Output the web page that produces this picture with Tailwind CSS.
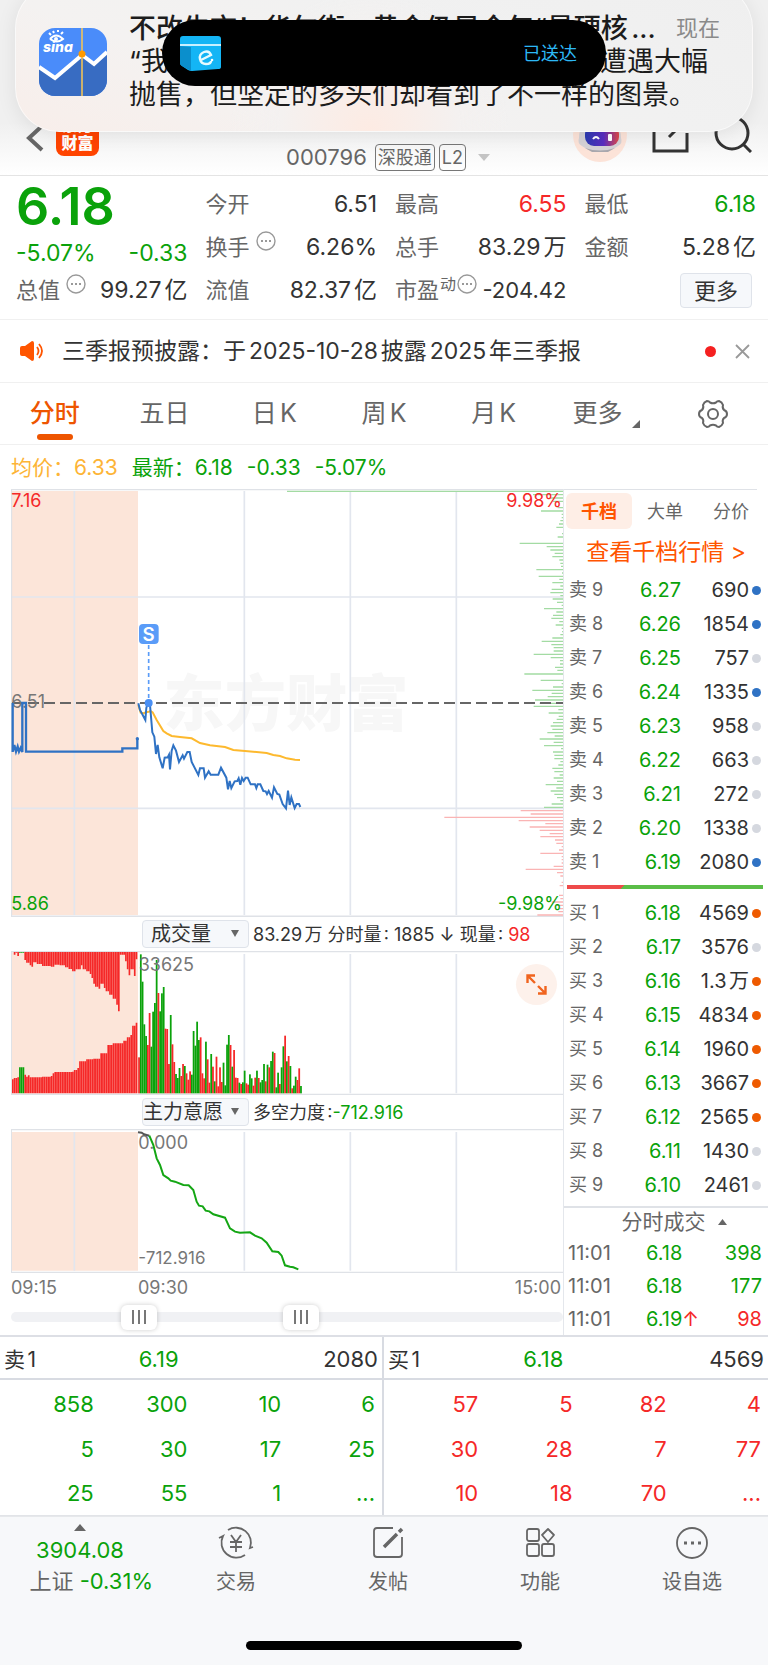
<!DOCTYPE html>
<html lang="zh-CN">
<head>
<meta charset="utf-8">
<meta name="viewport" content="width=device-width, initial-scale=1">
<title>凯撒旅业 000796</title>
<script src="https://cdn.jsdelivr.net/npm/@tailwindcss/browser@4"></script>
</head>
<body class="bg-white text-[#333] font-['Inter','Noto_Sans_CJK_SC',sans-serif] [text-autospace:normal]">

<!-- 顶部导航 -->
<header class="relative h-44 border-b border-[#e4e4e4] bg-linear-to-b from-[#f0f0f0] from-70% to-white">
  <div class="flex h-full items-end justify-between pl-6 pr-4">
    <div class="flex w-[220px] items-end gap-3 pb-[19px]">
      <button aria-label="返回" class="pb-1">
        <svg class="h-[28px] w-[20px]" viewBox="0 0 20 28" fill="none" stroke="#666" stroke-width="4"><path d="M18 2 5 14l13 12"/></svg>
      </button>
      <div class="h-[44px] w-[43px] rounded-lg bg-[#ff4400] pt-1 text-center text-base leading-[18px] font-black text-white">东方<br>财富</div>
    </div>
    <div class="flex flex-col items-center pr-3">
      <h1 class="pb-[5px] text-2xl leading-[26px] font-bold text-[#ff6a1a]">凯撒旅业</h1>
      <div class="flex h-9 items-center gap-1 text-[#666]">
        <span class="pr-1 text-[22px]">000796</span>
        <span class="rounded border border-[#777] px-[2px] text-[18px] leading-[25px]">深股通</span>
        <span class="rounded border border-[#777] px-[2px] text-[18px] leading-[25px]">L2</span>
        <svg class="ml-2 h-[7px] w-3" viewBox="0 0 12 7"><path d="M0 0h12L6 7z" fill="#c4c4c4"/></svg>
      </div>
    </div>
    <div class="flex w-[208px] items-end justify-end gap-[25px] pb-[13px]">
      <svg class="h-[54px] w-[54px]" viewBox="0 0 54 54">
        <defs>
          <linearGradient id="face"><stop offset="0" stop-color="#2a3bb0"/><stop offset=".55" stop-color="#5a2ec0"/><stop offset="1" stop-color="#e04848"/></linearGradient>
        </defs>
        <circle cx="27" cy="27" r="27" fill="#fce3d8"/>
        <path d="M6 30q0-18 21-18t21 18q2 5-3 8-8 6-18 6T9 38q-5-3-3-8z" fill="#d4d2d6"/>
        <path d="M12 40q15 5 30 0l-7 4H19z" fill="#a9a7ad"/>
        <rect x="12" y="17" width="34" height="21" rx="9" fill="url(#face)"/>
        <path d="M20 31q3-4 6 0" fill="none" stroke="#fff" stroke-width="2"/>
        <rect x="35" y="26" width="4" height="7" rx="1" fill="#fff"/>
      </svg>
      <button aria-label="分享" class="pb-[9px]">
        <svg class="h-[36px] w-[37px]" viewBox="0 0 37 36" fill="none" stroke="#333" stroke-width="3"><path d="M14 2H2v32h33V16M17 20 34 3M24 2h11v11"/></svg>
      </button>
      <button aria-label="搜索" class="pb-[9px]">
        <svg class="h-[38px] w-[38px]" viewBox="0 0 38 38" fill="none" stroke="#333" stroke-width="3"><circle cx="18" cy="18" r="16"/><path d="m29 29 8 8"/></svg>
      </button>
    </div>
  </div>

  <!-- 系统通知横幅 -->
  <aside class="absolute inset-x-[15px] -top-4 flex h-[148px] gap-[22px] rounded-[44px] border border-white/60 bg-[#f3f3f3] bg-[radial-gradient(circle_at_48%_100%,#fdebe3_0%,#f4f1f0_22%,transparent_34%),linear-gradient(20deg,#f8eeea_0%,#f4f2f1_32%,#f1f1f1_60%,#efefef_100%)] pt-[27px] pr-8 pl-[23px] shadow-[0_3px_20px_rgba(0,0,0,0.08)]">
    <svg class="mt-4 h-[68px] w-[68px] shrink-0" viewBox="0 0 68 68">
      <defs><clipPath id="app"><rect width="68" height="68" rx="16"/></clipPath></defs>
      <g clip-path="url(#app)">
        <path d="M0 0h68v68H0z" fill="#4a8cfa"/>
        <path d="m0 39 16 11 27-23 12 9 13-12v44H0z" fill="#386cc2"/>
        <path d="m0 39 16 11 27-23 12 9 13-12" fill="none" stroke="#fff" stroke-width="4"/>
        <path d="M43 0v68" stroke="#fbc750" stroke-width="1.5"/>
        <circle cx="43" cy="26" r="3.5" fill="#ff9a00"/>
      </g>
      <text x="4" y="24" font-size="14" font-weight="800" font-style="italic" fill="#fff">sina</text>
      <path d="M11 11q6-7 13 0-6 5-13 0M12 7l-2-2m5 0-1-2m5 1V2m3 4 2-2" fill="none" stroke="#fff" stroke-width="2"/>
      <circle cx="17" cy="11" r="2" fill="#fff"/>
    </svg>
    <div class="min-w-0 flex-1 text-[27px] leading-[33px] text-[#1c1c1c]">
      <div class="flex items-center justify-between">
        <strong class="whitespace-nowrap font-medium">不改牛市！华尔街：黄金仍是今年“最硬核...</strong>
        <time class="shrink-0 text-[22px] text-[#8a8a8a]">现在</time>
      </div>
      <p class="whitespace-nowrap">“我们从未见过如此行情，尽管黄金本周遭遇大幅<br>抛售，但坚定的多头们却看到了不一样的图景。</p>
    </div>
  </aside>

  <!-- 灵动岛 -->
  <div class="absolute top-5 left-1/2 flex h-[66px] w-[444px] -translate-x-1/2 items-center justify-between rounded-full bg-black pr-[29px] pl-[18px]">
    <svg class="h-[35px] w-[42px]" viewBox="0 0 42 35">
      <path d="M0 3q0-3 3-3h35q3 0 3 3v28q0 2-3 2l-26 2q-2 0-4-1l-6-4q-2-1-2-3z" fill="#14b5f5"/>
      <path d="M0 10l11 1v24l-9-5q-2-1-2-3z" fill="#0b8fcc"/>
      <path d="M0 8h41v2H0z" fill="#c8f0ff"/>
      <path d="M21 24l10-5q-2-5-7-3t-4 7 6 5 5-3" fill="none" stroke="#e8fbff" stroke-width="2.4"/>
      <circle cx="32" cy="24" r="1.3" fill="#fff"/>
    </svg>
    <span class="text-[18px] text-[#2db8f5]">已送达</span>
  </div>
</header>

<!-- 行情概要 -->
<section class="grid grid-cols-4 gap-x-[18px] border-b border-[#f0f0f0] pt-[6px] pr-3 pb-[7px] pl-4 text-[22px]">
  <div class="flex h-11 items-center pt-[6px] text-[52px] font-semibold text-[#0aa20a]">6.18</div>
  <div class="flex h-11 items-center justify-between"><span class="text-[#666]">今开</span><span class="text-[23px]">6.51</span></div>
  <div class="flex h-11 items-center justify-between"><span class="text-[#666]">最高</span><span class="text-[23px] text-[#f52828]">6.55</span></div>
  <div class="flex h-11 items-center justify-between"><span class="text-[#666]">最低</span><span class="text-[23px] text-[#0aa20a]">6.18</span></div>

  <div class="flex h-[43px] items-center justify-between pt-3 text-[23px] text-[#0aa20a]"><span>-5.07%</span><span>-0.33</span></div>
  <div class="flex h-[43px] items-center justify-between">
    <span class="flex items-start gap-[6px] text-[#666]">换手
      <svg class="h-5 w-5" viewBox="0 0 20 20" fill="none" stroke="#999" stroke-width="1.4"><circle cx="10" cy="10" r="9"/><path d="M5 10h2m2 0h2m2 0h2" stroke-width="2"/></svg>
    </span>
    <span class="text-[23px]">6.26%</span>
  </div>
  <div class="flex h-[43px] items-center justify-between"><span class="text-[#666]">总手</span><span class="text-[23px]">83.29万</span></div>
  <div class="flex h-[43px] items-center justify-between"><span class="text-[#666]">金额</span><span class="text-[23px]">5.28亿</span></div>

  <div class="flex h-[43px] items-center justify-between whitespace-nowrap">
    <span class="flex items-start gap-[6px] text-[#666]">总值
      <svg class="h-5 w-5" viewBox="0 0 20 20" fill="none" stroke="#999" stroke-width="1.4"><circle cx="10" cy="10" r="9"/><path d="M5 10h2m2 0h2m2 0h2" stroke-width="2"/></svg>
    </span>
    <span class="text-[23px]">99.27亿</span>
  </div>
  <div class="flex h-[43px] items-center justify-between"><span class="text-[#666]">流值</span><span class="text-[23px]">82.37亿</span></div>
  <div class="flex h-[43px] items-center justify-between whitespace-nowrap">
    <span class="flex items-start gap-[1px] text-[#666]">市盈<small class="text-base leading-5">动</small>
      <svg class="h-5 w-5" viewBox="0 0 20 20" fill="none" stroke="#999" stroke-width="1.4"><circle cx="10" cy="10" r="9"/><path d="M5 10h2m2 0h2m2 0h2" stroke-width="2"/></svg>
    </span>
    <span>-204.42</span>
  </div>
  <div class="flex h-[43px] items-center justify-end pr-1">
    <button class="h-[35px] w-[72px] rounded border border-[#dfe3ea] bg-[#f6f8fb] leading-8">更多</button>
  </div>
</section>

<!-- 公告 -->
<section class="flex h-[63px] items-center border-b border-[#f0f0f0] pr-[18px] pl-5">
  <svg class="h-[20px] w-[24px]" viewBox="0 0 24 20"><path d="M0 7q0-2 2-2h3l7-5q2 0 2 2v16q0 2-2 2l-7-5H2q-2 0-2-2z" fill="#ff5500"/><path d="M17 6q3 4 0 8M19 3q6 7 0 14" fill="none" stroke="#ff5500" stroke-width="1.8"/></svg>
  <a href="#" class="ml-[18px] flex-1 text-[23px]">三季报预披露：于2025-10-28披露2025年三季报</a>
  <span class="h-[11px] w-[11px] rounded-full bg-[#f52020]"></span>
  <button aria-label="关闭" class="ml-[19px]">
    <svg class="h-[15px] w-[15px]" viewBox="0 0 15 15" stroke="#999" stroke-width="1.8"><path d="m1 1 13 13M14 1 1 14"/></svg>
  </button>
</section>

<!-- 周期切换 -->
<nav class="grid h-[62px] grid-cols-7 border-b border-[#f0f0f0] text-[25px] text-[#666]">
  <button class="relative font-medium text-[#ee5500]">分时<span class="absolute bottom-1 left-1/2 h-[6px] w-9 -translate-x-1/2 rounded-full bg-[#ee5500]"></span></button>
  <button>五日</button>
  <button>日K</button>
  <button>周K</button>
  <button>月K</button>
  <button class="flex items-center justify-center gap-[10px] pl-[6px]">更多<svg class="mt-5 h-[8px] w-[8px]" viewBox="0 0 8 8"><path d="M8 0v8H0z" fill="#666"/></svg></button>
  <button aria-label="设置" class="flex items-center justify-center">
    <svg class="h-[30px] w-[30px]" viewBox="0 0 30 30" fill="none" stroke="#666" stroke-width="2"><path d="M9 2q2 0 3 1.500 3 1.500 6 0Q19 2 21 2q3 1 4 4-1 3 1 5 3 1 3 4t-3 4q-2 2-1 5-1 3-4 4-2 0-3-1.500-3-1.500-6 0Q11 28 9 28q-3-1-4-4 1-3-1-5-3-1-3-4t3-4q2-2 1-5 1-3 4-4z"/><circle cx="15" cy="15" r="5"/></svg>
  </button>
</nav>

<div class="flex h-11 items-center gap-[14px] pt-[2px] pl-[11px] text-[21px] text-[#0aa20a]">
  <span class="text-[#fdb436]">均价：6.33</span>
  <span>最新：6.18</span>
  <span>-0.33</span>
  <span>-5.07%</span>
</div>

<main class="flex border-b-2 border-[#dddfe5] pl-[11px]">
  <!-- 图表 -->
  <div class="min-w-0 flex-1">
    <svg class="block h-auto w-full" viewBox="33 27 1656 1284" font-size="54">
      <path d="M35 33h379v1272H35z" fill="#fce5d9"/>
      <text x="490" y="737" font-size="184" font-weight="800" fill="#f7f7f7">东方财富</text>
      <path d="M223 33v1272M733 33v1272M1051 33v1272M1369 33v1272M34 351h1655M34 985h1655" stroke="#e2e6ee" stroke-width="5"/>
      <path d="M33 28h1656M34 28v1282M33 1309h1656" fill="none" stroke="#dfe2e7" stroke-width="5"/>
      <path id="chipSell" fill="none" stroke="#a3dba3" stroke-width="4"/>
      <path id="chipBuy" fill="none" stroke="#fab4b4" stroke-width="4"/>
      <path d="M36 669h1653" stroke="#666" stroke-width="6" stroke-dasharray="33 15"/>
      <text x="34" y="81" fill="#f52828">7.16</text>
      <text x="34" y="684" fill="#777">6.51</text>
      <text x="34" y="1290" fill="#0aa20a">5.86</text>
      <text x="1686" y="81" text-anchor="end" fill="#f52828">9.98%</text>
      <text x="1686" y="1290" text-anchor="end" fill="#0aa20a">-9.98%</text>
      <path d="M38 816V669M38 793v22l5-20 5 20 5-15 4 15 5-11 5 12V669h11v146h289v-10h45v-29" fill="none" stroke="#2f72c4" stroke-width="7"/>
      <circle cx="412" cy="776" r="5" fill="#2f72c4"/>
      <polyline fill="none" stroke="#fdb92e" stroke-width="6" points="415,675 422,698 430,700 436,697 446,695 452,693 458,697 470,720 490,753 500,760 515,768 540,771 575,775 600,789 630,796 675,801 700,810 735,813 800,819 820,825 840,828 860,835 885,839 900,840"/>
      <polyline fill="none" stroke="#2f72c4" stroke-width="6" points="415,670 420,690 436,720 439,684 443,670 450,675 457,757 463,770 468,822 473,795 478,832 488,865 494,833 503,832 507,824 510,868 515,812 520,796 528,812 537,846 548,826 552,836 562,816 569,816 575,846 595,885 600,865 611,865 615,893 626,874 632,884 655,884 663,863 679,893 684,928 689,903 694,924 704,904 712,903 716,895 721,914 726,894 731,903 737,893 743,893 752,913 765,913 769,924 773,913 781,913 790,933 797,934 801,942 806,933 816,953 822,922 832,942 838,944 848,972 858,985 864,932 869,975 874,952 884,984 890,972 897,972 901,981"/>
      <path d="M446 495v165" stroke="#5a9cf8" stroke-width="5" stroke-dasharray="12 9"/>
      <circle cx="446" cy="669" r="12" fill="#4a90f5"/>
      <rect x="417" y="432" width="59" height="60" rx="12" fill="#5a9cf8"/>
      <text x="446" y="482" text-anchor="middle" font-size="56" font-weight="600" fill="#fff">S</text>
    </svg>

    <div class="flex h-[34px] items-center pl-[131px] text-[18px] whitespace-nowrap">
      <label class="relative block">
        <select aria-label="副图指标一" class="block h-[28px] w-[107px] appearance-none rounded border border-[#dfe3ea] bg-[#f6f8fb] pl-2 text-xl leading-6"><option>成交量</option></select>
        <svg class="pointer-events-none absolute top-[10px] right-[10px] h-[7px] w-[8px]" viewBox="0 0 8 7"><path d="M0 0h8L4 7z" fill="#666"/></svg>
      </label>
      <span class="ml-1">83.29万 分时量: 1885 ↓ 现量: <span class="text-[#f52828]">98</span></span>
    </div>

    <div class="relative">
      <svg class="block h-auto w-full" viewBox="33 123 1656 432" font-size="54">
        <path d="M35 127h379v423H35z" fill="#fce5d9"/>
        <path d="M223 132v418M733 132v418M1051 132v418M1369 132v418" stroke="#e2e6ee" stroke-width="5"/>
        <path d="M33 125h1656M34 125v429M33 553h1656" fill="none" stroke="#dfe2e7" stroke-width="4"/>
        <g id="auction"></g>
        <g id="volume"></g>
        <text x="416" y="184" fill="#777">33625</text>
      </svg>
      <button aria-label="全屏" class="absolute top-[13px] right-[6px] flex h-[41px] w-[41px] items-center justify-center rounded-full bg-[#fdf1eb]">
        <svg class="h-[21px] w-[21px]" viewBox="0 0 21 21" fill="none" stroke="#f0641e" stroke-width="2.4"><path d="M9 1.500H1.500V9M2 2l7 7M12 19.500h7.500V12M19 19l-7-7"/></svg>
      </button>
    </div>

    <div class="flex h-[34px] items-center pl-[131px] text-[18px] whitespace-nowrap">
      <label class="relative block">
        <select aria-label="副图指标二" class="block h-[28px] w-[107px] appearance-none rounded border border-[#dfe3ea] bg-[#f6f8fb] text-xl leading-6"><option>主力意愿</option></select>
        <svg class="pointer-events-none absolute top-[10px] right-[10px] h-[7px] w-[8px]" viewBox="0 0 8 7"><path d="M0 0h8L4 7z" fill="#666"/></svg>
      </label>
      <span class="ml-1">多空力度:<span class="text-[#0aa20a]">-712.916</span></span>
    </div>

    <svg class="block h-auto w-full" viewBox="33 657 1656 432" font-size="54">
      <path d="M35 666h379v416H35z" fill="#fce5d9"/>
      <path d="M223 666v416M733 666v416M1051 666v416M1369 666v416" stroke="#e2e6ee" stroke-width="5"/>
      <path d="M33 659h1656M34 659v429M33 1087h1656" fill="none" stroke="#dfe2e7" stroke-width="4"/>
      <text x="415" y="717" fill="#777">0.000</text>
      <text x="415" y="1061" font-size="51" fill="#777">-712.916</text>
      <polyline fill="none" stroke="#555" stroke-width="6" points="414,667 425,668 432,673 448,677"/>
      <polyline fill="none" stroke="#14a614" stroke-width="6" points="448,677 460,705 470,745 480,765 490,795 505,805 512,812 525,815 550,825 566,826 580,840 590,875 597,887 608,889 617,902 628,904 640,913 675,923 690,955 705,965 720,968 750,967 765,977 785,985 800,998 817,1024 835,1026 845,1037 855,1066 870,1070 880,1072 895,1078"/>
    </svg>

    <div class="flex h-[28px] items-center pr-[2px] text-[18px] text-[#777]">
      <span class="w-[127px]">09:15</span>
      <span class="flex-1">09:30</span>
      <span>15:00</span>
    </div>
    <!-- 区间滑块：两个 range 叠放 -->
    <div class="relative h-[33px]">
      <div class="absolute inset-x-0 top-[11px] h-[10px] rounded-full bg-[#f0f1f4]"></div>
      <input type="range" aria-label="开始时间" max="1000" value="213" class="pointer-events-none absolute inset-x-0 top-[3px] h-[26px] w-full appearance-none bg-transparent [&::-webkit-slider-thumb]:pointer-events-auto [&::-webkit-slider-thumb]:h-[25px] [&::-webkit-slider-thumb]:w-[36px] [&::-webkit-slider-thumb]:appearance-none [&::-webkit-slider-thumb]:rounded-md [&::-webkit-slider-thumb]:bg-white [&::-webkit-slider-thumb]:bg-[linear-gradient(90deg,transparent_11px,#777_11px,#777_13px,transparent_13px,transparent_17px,#777_17px,#777_19px,transparent_19px,transparent_23px,#777_23px,#777_25px,transparent_25px)] [&::-webkit-slider-thumb]:bg-[length:100%_14px] [&::-webkit-slider-thumb]:bg-center [&::-webkit-slider-thumb]:bg-no-repeat [&::-webkit-slider-thumb]:shadow-[0_0_5px_rgba(0,0,0,0.2)]">
      <input type="range" aria-label="结束时间" max="1000" value="527" class="pointer-events-none absolute inset-x-0 top-[3px] h-[26px] w-full appearance-none bg-transparent [&::-webkit-slider-thumb]:pointer-events-auto [&::-webkit-slider-thumb]:h-[25px] [&::-webkit-slider-thumb]:w-[36px] [&::-webkit-slider-thumb]:appearance-none [&::-webkit-slider-thumb]:rounded-md [&::-webkit-slider-thumb]:bg-white [&::-webkit-slider-thumb]:bg-[linear-gradient(90deg,transparent_11px,#777_11px,#777_13px,transparent_13px,transparent_17px,#777_17px,#777_19px,transparent_19px,transparent_23px,#777_23px,#777_25px,transparent_25px)] [&::-webkit-slider-thumb]:bg-[length:100%_14px] [&::-webkit-slider-thumb]:bg-center [&::-webkit-slider-thumb]:bg-no-repeat [&::-webkit-slider-thumb]:shadow-[0_0_5px_rgba(0,0,0,0.2)]">
    </div>
  </div>

  <!-- 盘口 -->
  <aside class="w-[205px] border-l border-[#e4e7ec]">
    <div class="mr-[11px] h-px bg-[#dfe2e7]"></div>
    <div class="mt-[3px] mr-1 ml-[2px] grid h-9 grid-cols-3 text-[18px] text-[#666]">
      <button class="rounded-md bg-[#feeee6] font-bold text-[#ff5500]">千档</button>
      <button>大单</button>
      <button>分价</button>
    </div>
    <a href="#" class="flex h-11 items-center justify-center pt-[2px] text-[23px] text-[#ff5500]">查看千档行情 &gt;</a>
    <table class="w-full text-xl"><tbody id="asks"></tbody></table>
    <div class="mt-[6px] mr-[5px] mb-[7px] ml-[3px] h-1 bg-[linear-gradient(135deg,#ee4a4a_29%,#5bbd48_29%)]"></div>
    <table class="w-full text-xl"><tbody id="bids"></tbody></table>
    <div class="mt-1 border-t-2 border-[#dfe2e7]">
      <button class="flex h-[28px] w-full items-center justify-center gap-3 pl-4 text-[21px] text-[#666]">分时成交<svg class="h-[6px] w-[9px]" viewBox="0 0 9 6"><path d="M0 6h9L4.500 0z" fill="#666"/></svg></button>
      <table class="w-full text-xl text-[#0aa20a]">
        <tbody>
          <tr class="h-[33px]"><td class="w-[82px] pl-1 text-[#666]">11:01</td><td>6.18</td><td class="pr-[6px] text-right">398</td></tr>
          <tr class="h-[33px]"><td class="pl-1 text-[#666]">11:01</td><td>6.18</td><td class="pr-[6px] text-right">177</td></tr>
          <tr class="h-[33px]"><td class="pl-1 text-[#666]">11:01</td><td>6.19<span class="text-[#f52828]">↑</span></td><td class="pr-[6px] text-right text-[#f52828]">98</td></tr>
        </tbody>
      </table>
    </div>
  </aside>
</main>

<!-- 买一卖一队列 -->
<section class="grid grid-cols-2 border-b border-[#e2e4e8] text-[22px]">
  <div class="border-r-2 border-[#d8dbe2]">
    <div class="flex h-[43px] items-center border-b-2 border-[#d8dbe2] px-1 pt-1">
      <span class="w-[36%] text-[21px]">卖1</span><span class="flex-1 text-[#0aa20a]">6.19</span><span>2080</span>
    </div>
    <div class="pt-[2px] pr-[7px]">
      <table class="w-full table-fixed text-right text-[#0aa20a]">
        <tbody>
          <tr class="h-[45px]"><td>858</td><td>300</td><td>10</td><td>6</td></tr>
          <tr class="h-[44px]"><td>5</td><td>30</td><td>17</td><td>25</td></tr>
          <tr class="h-[44px]"><td>25</td><td>55</td><td>1</td><td>...</td></tr>
        </tbody>
      </table>
    </div>
  </div>
  <div>
    <div class="flex h-[43px] items-center border-b-2 border-[#d8dbe2] px-1 pt-1">
      <span class="w-[36%] text-[21px]">买1</span><span class="flex-1 text-[#0aa20a]">6.18</span><span>4569</span>
    </div>
    <div class="pt-[2px] pr-[7px]">
      <table class="w-full table-fixed text-right text-[#f52828]">
        <tbody>
          <tr class="h-[45px]"><td>57</td><td>5</td><td>82</td><td>4</td></tr>
          <tr class="h-[44px]"><td>30</td><td>28</td><td>7</td><td>77</td></tr>
          <tr class="h-[44px]"><td>10</td><td>18</td><td>70</td><td>...</td></tr>
        </tbody>
      </table>
    </div>
  </div>
</section>

<!-- 底部导航 -->
<footer class="border-t border-[#e6e8eb] bg-[#f7f8fa] pb-[15px]">
  <nav class="flex h-[124px] pt-[7px] text-xl text-[#666]">
    <button class="flex w-[160px] flex-col items-center text-[22px] leading-[31px]">
      <svg class="mb-1 h-[7px] w-3" viewBox="0 0 12 7"><path d="M0 7h12L6 0z" fill="#666"/></svg>
      <span class="text-[#0aa20a]">3904.08</span>
      <span class="self-end pr-[7px]">上证 <span class="text-[#0aa20a]">-0.31%</span></span>
    </button>
    <button class="flex flex-1 flex-col items-center gap-2 pt-[2px]">
      <svg class="h-[34px] w-[36px]" viewBox="0 0 36 34" fill="none" stroke="#666" stroke-width="1.800"><path d="M10 4a15 15 0 0 1 22 18l3-1M27 29A15 15 0 0 1 5 10l-4 2M13 9l5 7 5-7M12 16h12M12 21h12M18 16v10"/></svg>
      交易
    </button>
    <button class="flex flex-1 flex-col items-center gap-2 pt-[2px]">
      <svg class="h-[34px] w-[32px]" viewBox="0 0 32 34" fill="none" stroke="#666" stroke-width="1.800"><path d="M21 2H5Q2 2 2 5v23q0 3 3 3h22q3 0 3-3V11"/><path d="M12 21 25 8M27 6l3-3" stroke-width="3.500"/></svg>
      发帖
    </button>
    <button class="flex flex-1 flex-col items-center gap-2 pt-[2px]">
      <svg class="h-[34px] w-[32px]" viewBox="0 0 32 34" fill="none" stroke="#666" stroke-width="1.800"><rect x="3" y="3" width="12" height="12" rx="2"/><rect x="3" y="18" width="12" height="12" rx="2"/><rect x="18" y="18" width="12" height="12" rx="2"/><path d="m24 3 6 6-6 7-6-7z" stroke-linejoin="round"/></svg>
      功能
    </button>
    <button class="flex flex-1 flex-col items-center gap-2 pt-[2px]">
      <svg class="h-[34px] w-[32px]" viewBox="0 0 32 34" fill="none" stroke="#666" stroke-width="1.800"><circle cx="16" cy="17" r="15"/><path d="M8 17h3m4 0h3m4 0h3" stroke-width="3"/></svg>
      设自选
    </button>
  </nav>
  <div class="mx-auto h-[9px] w-[276px] rounded-full bg-black"></div>
</footer>

<script>
const RED = '#f52828', GREEN = '#0aa20a';

// 盘口：档位、价格、数量、圆点颜色
const BLUE = 'bg-[#2f72c4]', ORANGE = 'bg-[#ee5a00]', GREY = 'bg-[#d5d8df]';
const asks = [['9', '6.27', '690', BLUE], ['8', '6.26', '1854', BLUE], ['7', '6.25', '757', GREY], ['6', '6.24', '1335', BLUE], ['5', '6.23', '958', GREY], ['4', '6.22', '663', GREY], ['3', '6.21', '272', GREY], ['2', '6.20', '1338', GREY], ['1', '6.19', '2080', BLUE]];
const bids = [['1', '6.18', '4569', ORANGE], ['2', '6.17', '3576', GREY], ['3', '6.16', '1.3万', ORANGE], ['4', '6.15', '4834', ORANGE], ['5', '6.14', '1960', ORANGE], ['6', '6.13', '3667', ORANGE], ['7', '6.12', '2565', ORANGE], ['8', '6.11', '1430', GREY], ['9', '6.10', '2461', GREY]];

function renderLevels(id, side, rows) {
  document.getElementById(id).innerHTML = rows.map(r => `
    <tr class="h-[34px]">
      <td class="pl-[5px] text-[18px] text-[#666]">${side} ${r[0]}</td>
      <td class="w-[64px] text-right text-[#0aa20a]">${r[1]}</td>
      <td class="w-[68px] text-right">${r[2]}</td>
      <td class="w-[19px] pl-[3px]"><span class="block h-[9px] w-[9px] rounded-full ${r[3]}"></span></td>
    </tr>`).join('');
}
renderLevels('asks', '卖', asks);
renderLevels('bids', '买', bids);

// 右侧筹码：[y, 长度]
const chipSell = [[34,828],[44,90],[54,40],[64,30],[83,16],[93,66],[103,4],[113,4],[122,8],[132,12],[142,20],[161,3],[171,16],[190,130],[200,49],[210,38],[220,25],[230,32],[240,11],[250,8],[259,6],[269,80],[279,3],[289,73],[298,11],[308,32],[318,8],[328,34],[338,38],[347,8],[357,31],[367,18],[376,4],[386,57],[396,20],[406,30],[415,35],[425,11],[435,22],[445,4],[455,3],[464,8],[474,32],[484,64],[494,35],[503,28],[513,28],[523,88],[533,37],[542,9],[552,9],[562,24],[571,17],[582,116],[601,67],[611,4],[621,30],[631,92],[640,34],[650,46],[660,84],[670,70],[679,88],[689,14],[699,43],[709,13],[718,19],[728,30],[738,37],[748,32],[758,47],[768,25],[777,70],[787,28],[797,57],[806,6],[816,30],[826,26],[836,26],[845,8],[855,14],[865,32],[875,26],[885,10],[894,28],[904,18],[914,52],[924,20],[933,37],[943,26],[953,18],[962,8],[972,34],[982,57]];
const chipBuy = [[992,127],[1002,97],[1012,356],[1022,133],[1031,53],[1041,100],[1051,70],[1061,40],[1070,68],[1080,24],[1090,20],[1100,4],[1110,12],[1120,68],[1130,4],[1139,4],[1149,4],[1159,28],[1168,112],[1178,18],[1188,8],[1207,4],[1217,10],[1246,12],[1256,8],[1266,34],[1276,18],[1286,10],[1295,14],[1305,77]];
const chipPath = rows => rows.map(([y, w]) => `M1689 ${y}h-${w}`).join('');
document.getElementById('chipSell').setAttribute('d', chipPath(chipSell));
document.getElementById('chipBuy').setAttribute('d', chipPath(chipBuy));

// 集合竞价：[x, 高度]，取不大于当前 x 的最近一段
const auctionTop = [[35,0],[39,8],[46,2],[52,12],[57,2],[70,24],[78,32],[88,40],[94,44],[99,31],[110,36],[125,42],[150,44],[160,38],[180,40],[195,46],[205,51],[218,58],[225,52],[240,40],[246,52],[256,58],[266,66],[273,78],[279,95],[286,104],[296,110],[302,95],[310,108],[318,118],[328,128],[340,140],[346,158],[353,178],[360,8],[375,28],[381,52],[387,70],[393,52],[399,72],[404,22]];
const auctionBottom = [[35,42],[42,46],[50,48],[57,78],[70,56],[76,50],[82,54],[88,48],[125,50],[150,52],[158,60],[164,64],[215,65],[222,70],[230,76],[238,96],[258,102],[280,104],[302,120],[324,145],[340,150],[370,158],[382,168],[390,175],[395,203],[404,212]];
const at = (rows, x) => rows.filter(r => r[0] <= x + 2).pop()[1];
let html = '';
for (let x = 36; x < 408; x += 5.3) {
  const t = at(auctionTop, x), b = at(auctionBottom, x);
  const fill = x > 56 && x < 68 ? GREEN : RED;
  html += `<path d="M${x} 126h5v${t}h-5zM${x} 550h5v-${b}h-5z" fill="${fill}"/>`;
}
document.getElementById('auction').innerHTML = html;

// 分时成交量
const volume = 'r108 g417 g335 g207 g172 r145 r241 g140 g245 g271 g400 r301 g246 g300 g319 r194 r193 r88 g235 r147 r94 g58 g46 g76 r52 r88 g82 r60 r41 r66 g56 g187 g143 g215 g160 r168 r60 r45 g155 r102 r32 g118 r80 g36 r110 r21 r78 r34 g92 g24 g146 g175 r145 g80 r130 r47 r46 g32 r28 g33 g68 r30 r26 g57 g45 r23 r47 g68 r46 g33 g40 g88 r36 g86 r78 g97 g125 r121 g18 g62 r28 g78 g141 r173 g96 r112 g82 r15 g23 g50 r40 r75 g22';
document.getElementById('volume').innerHTML = volume.split(' ').map((v, i) =>
  `<rect x="${414.5 + i * 5.28}" y="${550 - v.slice(1)}" width="5.3" height="${v.slice(1)}" fill="${v[0] === 'r' ? RED : GREEN}"/>`).join('');
</script>
</body>
</html>
